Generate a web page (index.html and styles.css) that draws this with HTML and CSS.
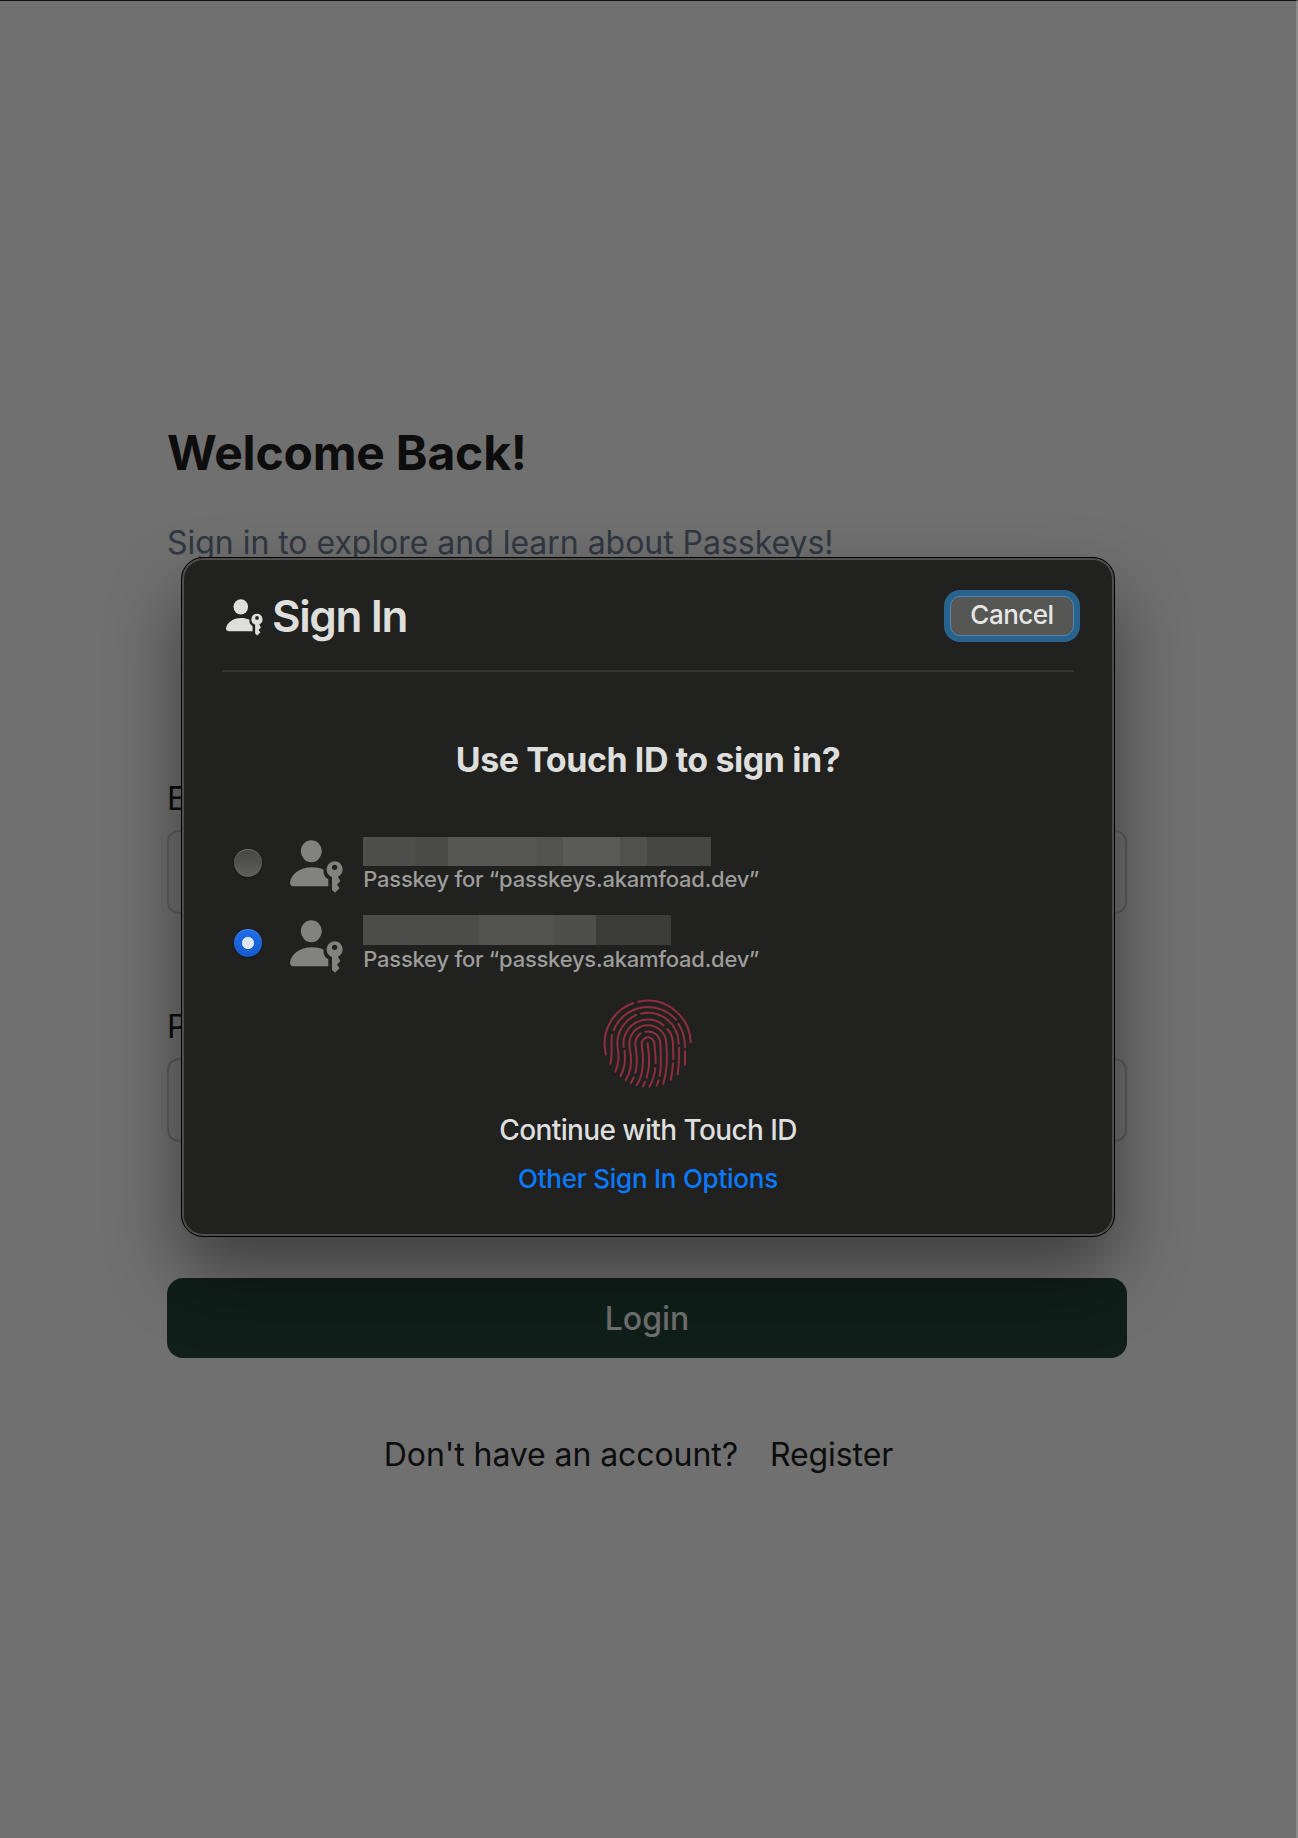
FILE: index.html
```
<!DOCTYPE html>
<html lang="en">
<head>
<meta charset="utf-8">
<title>Sign In</title>
<link rel="stylesheet" href="styles.css">
</head>
<body>
<svg class="defs" width="0" height="0" aria-hidden="true">
  <symbol id="person-key" viewBox="420 299 160 160">
    <ellipse cx="484" cy="333" rx="31.5" ry="33"/>
    <path d="M432 438C424 438 420 434 420 427C423 402 450 381 485 381C499 381 511 383 521 388C519 402 525 411 535 417V438Z"/>
    <path fill-rule="evenodd" d="M554 362.500A24.500 24.500 0 0 1 564 409L571 422L561 433L569 443L555 457L546 448V410A24.500 24.500 0 0 1 554 362.500ZM554 373A8 8 0 1 0 554 389A8 8 0 1 0 554 373Z"/>
  </symbol>
</svg>
<main class="page">
  <h1 class="title">Welcome Back!</h1>
  <p class="subtitle">Sign in to explore and learn about Passkeys!</p>
  <form class="form">
    <label class="label" for="email">Email</label>
    <input class="input" id="email" type="email">
    <label class="label" for="password">Password</label>
    <input class="input" id="password" type="password">
    <button class="login" type="button">Login</button>
  </form>
  <p class="register"><span>Don't have an account?</span><a>Register</a></p>
</main>
<section class="dialog" role="dialog">
  <header class="head">
    <svg class="head-icon"><use href="#person-key"/></svg>
    <h2 class="head-title">Sign In</h2>
    <button class="cancel" type="button">Cancel</button>
  </header>
  <h3 class="question">Use Touch ID to sign in?</h3>
  <div class="option">
    <span class="radio"></span>
    <svg class="option-icon"><use href="#person-key"/></svg>
    <div class="option-text">
      <div class="mask mask-a"><i></i><i></i><i></i><i></i><i></i><i></i><i></i></div>
      <p class="passkey">Passkey for “passkeys.akamfoad.dev”</p>
    </div>
  </div>
  <div class="option">
    <span class="radio checked"></span>
    <svg class="option-icon"><use href="#person-key"/></svg>
    <div class="option-text">
      <div class="mask mask-b"><i></i><i></i><i></i><i></i></div>
      <p class="passkey">Passkey for “passkeys.akamfoad.dev”</p>
    </div>
  </div>
  <svg class="finger" viewBox="130 55 270 270">
    <path d="M221 70A130 130 0 0 0 139 225M236 66A129 129 0 0 1 393 188"/>
    <path d="M162 152A111 111 0 0 1 349 120M356 132Q376 162 376 203M376 215V255M157 166C152 195 161 220 152 253"/>
    <path d="M230 106A93 93 0 0 0 173 190C173 215 184 235 167 276M244 102A92 92 0 0 1 357 192M358 204Q359 250 354 284"/>
    <path d="M192 202A73 73 0 0 1 312 137M323 148Q340 167 340 192L341 239M340 251Q339 276 333 300M195 214C197 245 196 265 182 290"/>
    <path d="M198 302C214 275 217 250 213 225C210 210 209 205 209 192A55.500 55.500 0 0 1 320 192C323 240 323 270 311 312"/>
    <path d="M243 161Q227 173 227 192C227 210 238 240 227 280M222 293L214 310M257 156C284 152 302 170 302 192C304 230 306 260 300 289M297 302L291 318"/>
    <path d="M231 316C246 295 250 270 250 240C250 215 246 205 246 192A19 19 0 0 1 284 192C286 215 288 230 288 250M287 265C284 290 279 305 269 321"/>
    <path d="M264 191C266 210 275 250 261 294M256 307L250 320"/>
  </svg>
  <p class="continue">Continue with Touch ID</p>
  <a class="other">Other Sign In Options</a>
</section>
</body>
</html>
```
FILE: styles.css
```
* { box-sizing: border-box; margin: 0; padding: 0; }
body {
  position: relative;
  height: 1838px;
  overflow: hidden;
  background: #707070;
  border-top: 1px solid #111;
  border-right: 2px solid #8b8b8b;
  font-family: Inter, "Liberation Sans", sans-serif;
  color: #0d0d0d;
}
.defs { position: absolute; }
.page { width: 960px; margin-left: 167px; padding-top: 423px; font-size: 32px; }
.title { font-size: 48px; line-height: 58px; font-weight: 720; letter-spacing: -0.2px; }
.subtitle { margin-top: 41px; line-height: 40px; color: #313842; letter-spacing: -0.03px; }
.form { display: flex; flex-direction: column; margin-top: 212px; }
.label { line-height: 48px; margin-bottom: 7px; height: 48px; }
.input {
  height: 84px; margin-bottom: 89px;
  background: transparent; border: 2px solid #5d5d5d; border-radius: 12px;
}
.login {
  height: 80px; margin-top: 47px; padding-top: 1px; border: 0; border-radius: 16px;
  background: #101f1a; color: #707070;
  font: 500 32px/79px Inter, "Liberation Sans", sans-serif;
}
.register { display: flex; justify-content: center; gap: 32px; margin-top: 73px; padding-right: 17px; line-height: 48px; letter-spacing: -0.08px; }

.dialog {
  position: absolute; left: 181px; top: 556px;
  width: 934px; height: 680px;
  display: flex; flex-direction: column;
  padding: 0 38px;
  background: #21211f;
  border: 1px solid #000; border-radius: 22px;
  box-shadow: inset 0 0 0 2px #4d4d4b, 0 36px 72px rgba(0, 0, 0, .45);
  color: #dededd;
}
.head {
  display: flex; align-items: center; flex: none;
  width: 852px; height: 114px; margin-left: 2px;
  padding-left: 4px;
  border-bottom: 2px solid #373735;
}
.head-icon { width: 37px; height: 37px; margin-top: 7px; fill: #dededd; }
.head-title { margin-left: 9px; margin-top: 4px; font-size: 44px; font-weight: 600; line-height: 54px; letter-spacing: -1.400px; }
.cancel {
  width: 124px; height: 40px; margin-left: auto; margin-top: 4px; padding-bottom: 2px;
  background: #565654; border: 1px solid #5087b5; border-radius: 10px;
  box-shadow: 0 0 0 6px #28638e;
  color: #e6e6e5; font: 450 26px/36px Inter, "Liberation Sans", sans-serif; letter-spacing: -0.5px;
}
.question { margin-top: 67px; text-align: center; font-size: 34px; line-height: 42px; font-weight: 700; letter-spacing: -0.440px; }
.option { display: flex; flex: none; height: 80px; }
.question + .option { margin-top: 56px; }
.radio {
  width: 28px; height: 28px; margin: 12px 0 0 14px; border-radius: 50%;
  background: linear-gradient(#444442, #5f5f5d);
  box-shadow: inset 0 1px 0 #6a6a68, 0 1px 2px rgba(0, 0, 0, .5);
}
.checked {
  background: radial-gradient(circle, #dde6f8 5.7px, transparent 6.400px), linear-gradient(#1c6eea, #165bcc);
  box-shadow: inset 0 1px 0 #4c8cee, 0 1px 2px rgba(0, 0, 0, .5);
}
.option-icon { width: 53.300px; height: 53.300px; margin: 2.500px 0 0 28px; fill: #828281; }
.option-text { margin-left: 20px; }
.mask { display: flex; height: 29px; }
.mask-b { height: 30px; margin-top: -2px; }
.passkey { margin-top: -1px; font-size: 22px; line-height: 28px; font-weight: 500; letter-spacing: -0.240px; color: #9c9c9b; }
.mask-b + .passkey { margin-top: 0; }
.mask-a i:nth-child(1) { width: 52px; background: #4e4e4c; }
.mask-a i:nth-child(2) { width: 33px; background: #4a4a48; }
.mask-a i:nth-child(3) { width: 89px; background: #565654; }
.mask-a i:nth-child(4) { width: 26px; background: #525250; }
.mask-a i:nth-child(5) { width: 57px; background: #5a5a58; }
.mask-a i:nth-child(6) { width: 27px; background: #50504e; }
.mask-a i:nth-child(7) { width: 64px; background: #464644; }
.mask-b i:nth-child(1) { width: 116px; background: #4c4c4a; }
.mask-b i:nth-child(2) { width: 75px; background: #525250; }
.mask-b i:nth-child(3) { width: 42px; background: #4e4e4c; }
.mask-b i:nth-child(4) { width: 75px; background: #3c3c3a; }
.finger {
  width: 90px; height: 90px; align-self: center; margin-top: 1px; flex: none;
  fill: none; stroke: #8f2e40; stroke-width: 6; stroke-linecap: round;
}
.continue { margin-top: 24px; text-align: center; font-size: 28px; line-height: 36px; font-weight: 450; letter-spacing: -0.6px; }
.other { margin-top: 14px; text-align: center; font-size: 26px; line-height: 34px; font-weight: 450; letter-spacing: -0.25px; color: #0a7aff; }
```
